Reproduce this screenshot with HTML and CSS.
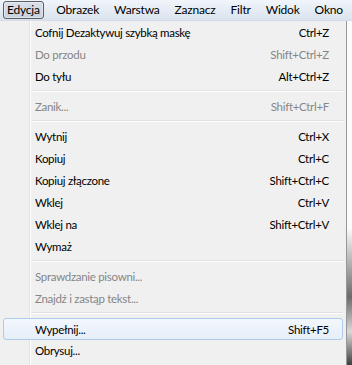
FILE: index.html
```html
<!DOCTYPE html>
<html lang="pl">
<head>
  <meta charset="UTF-8">
  <title>Edycja</title>
  <link rel="stylesheet" href="styles.css">
</head>
<body>
  <nav class="menubar">
    <span class="top-item active">Edycja</span>
    <span class="top-item">Obrazek</span>
    <span class="top-item">Warstwa</span>
    <span class="top-item">Zaznacz</span>
    <span class="top-item">Filtr</span>
    <span class="top-item">Widok</span>
    <span class="top-item">Okno</span>
  </nav>

  <div class="stage">
    <ul class="menu">
      <li class="item"><span>Cofnij Dezaktywuj szybką maskę</span><span class="key">Ctrl+Z</span></li>
      <li class="item disabled"><span>Do przodu</span><span class="key">Shift+Ctrl+Z</span></li>
      <li class="item"><span>Do tyłu</span><span class="key">Alt+Ctrl+Z</span></li>
      <li class="sep"></li>
      <li class="item disabled"><span>Zanik...</span><span class="key">Shift+Ctrl+F</span></li>
      <li class="sep"></li>
      <li class="item"><span>Wytnij</span><span class="key">Ctrl+X</span></li>
      <li class="item"><span>Kopiuj</span><span class="key">Ctrl+C</span></li>
      <li class="item"><span>Kopiuj złączone</span><span class="key">Shift+Ctrl+C</span></li>
      <li class="item"><span>Wklej</span><span class="key">Ctrl+V</span></li>
      <li class="item"><span>Wklej na</span><span class="key">Shift+Ctrl+V</span></li>
      <li class="item"><span>Wymaż</span></li>
      <li class="sep"></li>
      <li class="item disabled"><span>Sprawdzanie pisowni...</span></li>
      <li class="item disabled"><span>Znajdź i zastąp tekst...</span></li>
      <li class="sep"></li>
      <li class="item hover"><span>Wypełnij...</span><span class="key">Shift+F5</span></li>
      <li class="item"><span>Obrysuj...</span></li>
    </ul>
    <div class="edge"></div>
  </div>
</body>
</html>
```

FILE: styles.css
```css
* {
  box-sizing: border-box;
}

body {
  margin: 0;
  padding: 0;
  font-family: Lato, 'Noto Sans', sans-serif;
  font-size: 11.5px;
  letter-spacing: -0.3px;
  color: #000;
  background: #f0f0f0;
  width: 352px;
  height: 365px;
  overflow: hidden;
}

.menubar {
  display: flex;
  align-items: center;
  height: 21px;
  padding: 0 0 0 3px;
  background: linear-gradient(#f1f5fb, #dae3ee);
  border-bottom: 1px solid #d5dce6;
}

.top-item {
  height: 18px;
  line-height: 16px;
  padding: 0 6.5px;
  border: 1px solid transparent;
  border-radius: 3px;
  white-space: nowrap;
  font-size: 12px;
  letter-spacing: -0.2px;
}

.top-item.active {
  border-color: #5a5f66;
  background: linear-gradient(#d9e0ea, #c8d1dd);
  padding: 0 3px;
  margin-right: 5px;
  box-shadow: inset 0 0 0 1px rgba(255, 255, 255, 0.4);
}

.stage {
  display: flex;
}

.menu {
  list-style: none;
  margin: 0;
  padding: 0;
  width: 347px;
  height: 345px;
  background:
    linear-gradient(90deg, transparent 29px, #e2e3e3 29px, #e2e3e3 30px, #fff 30px, #fff 31px, transparent 31px),
    #f0f0f0;
  border-right: 1px solid #979797;
}

.item {
  display: flex;
  justify-content: space-between;
  align-items: center;
  height: 22px;
  padding: 0 17px 0 35px;
  white-space: nowrap;
}

.item.disabled {
  color: #868686;
}

.item.hover {
  margin: 1px 3px 0 3px;
  height: 22px;
  padding: 0 13px 0 31px;
  border: 1px solid #aecbec;
  border-radius: 3px;
  background: linear-gradient(#f3f7fc, #e6eef9);
}

.item.hover + .item {
  height: 21px;
}

.sep {
  height: 8px;
  margin-left: 31px;
  margin-right: 3px;
  background: linear-gradient(transparent 3px, #e0e0e0 3px, #e0e0e0 4px, #fff 4px, #fff 5px, transparent 5px);
}

.edge {
  flex: 1;
  background: linear-gradient(#fbfbfb 60%, #6b6b6b 80%, #d8d8d8 90%, #3a3a3a);
}
```
